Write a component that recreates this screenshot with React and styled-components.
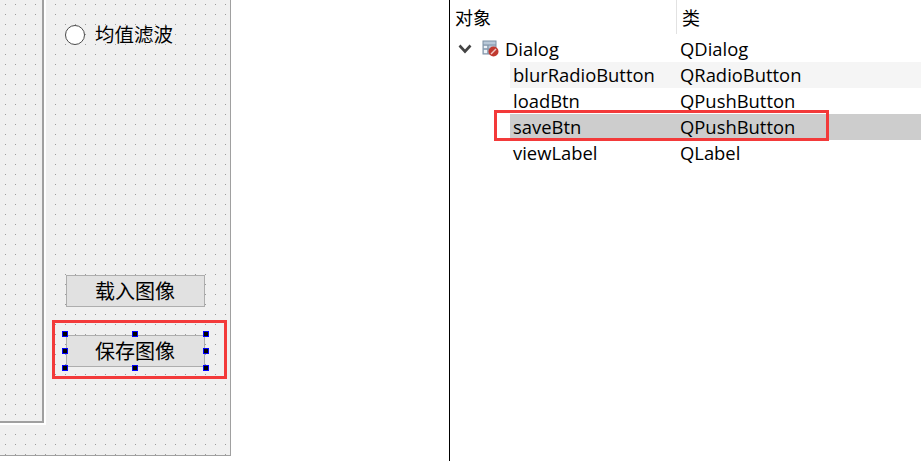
import React from "react";
import styled, { createGlobalStyle } from "styled-components";

const GlobalStyle = createGlobalStyle`
  html, body {
    margin: 0;
    padding: 0;
    background: #fff;
    overflow: hidden;
  }
  body {
    font-family: "Open Sans", "Noto Sans CJK SC", sans-serif;
    color: #000;
  }
`;

const items = [
  { name: "blurRadioButton", type: "QRadioButton", tone: "#f5f5f5" },
  { name: "loadBtn", type: "QPushButton" },
  { name: "saveBtn", type: "QPushButton", tone: "#cdcdcd" },
  { name: "viewLabel", type: "QLabel" },
];

const Page = styled.div`
  width: 921px;
  height: 461px;
  display: flex;
  background: #fff;
`;

const FormCanvas = styled.div`
  width: 231px;
  height: 456px;
  box-sizing: border-box;
  display: flex;
  background-color: #f0f0f0;
  background-image: conic-gradient(at 1px 1px, transparent 75%, #9a9a9a 0);
  background-size: 10px 10px;
  background-position: 5px 4px;
  border-right: 1px solid #a0a0a0;
  border-bottom: 1px solid #a0a0a0;
`;

const ViewFrame = styled.div`
  width: 46px;
  height: 425px;
  flex: none;
  box-sizing: border-box;
  border-right: 2px solid #fff;
  border-bottom: 2px solid #fff;
`;

const FrameEdge = styled.div`
  height: 100%;
  box-sizing: border-box;
  border-right: 2px solid #a0a0a0;
  border-bottom: 2px solid #a0a0a0;
`;

const Controls = styled.div`
  flex: 1;
  display: flex;
  flex-direction: column;
  padding-left: 6px;
`;

const RadioRow = styled.label`
  display: flex;
  align-items: center;
  gap: 10px;
  height: 20px;
  margin: 25px 0 230px 13px;
  font-size: 19.5px;
  line-height: 18px;
`;

const RadioDot = styled.span`
  width: 20px;
  height: 20px;
  box-sizing: border-box;
  border: 1px solid #4a4a4a;
  border-radius: 50%;
  background: #fff;
`;

const FormButton = styled.div`
  width: 139px;
  height: 32px;
  box-sizing: border-box;
  display: flex;
  align-items: center;
  justify-content: center;
  padding: 0 1px 2px 0;
  border: 1px solid #adadad;
  background: #e1e1e1;
  font-size: 20px;
`;

const LoadButton = styled(FormButton)`
  margin-left: 14px;
`;

const SaveOutline = styled.div`
  width: 175px;
  height: 59px;
  box-sizing: border-box;
  margin-top: 13px;
  padding: 12px 0 0 11px;
  border: 3px solid #f33a3a;
`;

const SaveButton = styled(FormButton)`
  position: relative;
`;

const Handle = styled.span`
  position: absolute;
  width: 6px;
  height: 6px;
  box-sizing: border-box;
  background: #000;
  border: 1px solid #0000ff;
  left: ${(p) => p.$x}px;
  top: ${(p) => p.$y}px;
`;

const Inspector = styled.div`
  margin-left: 218px;
  flex: 1;
  min-width: 0;
  border-left: 1px solid #000;
  position: relative;
`;

const HeaderRow = styled.div`
  display: flex;
  height: 36px;
  font-size: 18px;
`;

const HeaderCell = styled.div`
  width: ${(p) => p.$w}px;
  height: 34px;
  box-sizing: border-box;
  padding-left: ${(p) => p.$pad}px;
  display: flex;
  align-items: center;
  border-right: ${(p) => (p.$divider ? "1px solid #e2e2e2" : "none")};
`;

const TreeRow = styled.div`
  display: flex;
  align-items: center;
  height: 26px;
  box-sizing: border-box;
  padding-bottom: 1px;
  margin-left: ${(p) => p.$indent}px;
  background: ${(p) => p.$tone || "transparent"};
  font-size: 18.4px;
  line-height: 24px;
  white-space: nowrap;
`;

const NameCell = styled.div`
  width: ${(p) => p.$w}px;
  flex: none;
  box-sizing: border-box;
  padding-left: 3px;
`;

const RootName = styled.div`
  width: 230px;
  flex: none;
  display: flex;
  align-items: center;
  padding-left: 8px;
  box-sizing: border-box;
`;

const Chevron = styled.svg`
  width: 14px;
  height: 10px;
  margin-right: 10px;
`;

const DialogIcon = styled.svg`
  width: 17px;
  height: 17px;
  margin-right: 6px;
`;

const SelectionOutline = styled.div`
  position: absolute;
  left: 44px;
  top: 110px;
  width: 335px;
  height: 31px;
  box-sizing: border-box;
  border: 3px solid #f33a3a;
`;

const handles = [
  [-5, -5],
  [65, -5],
  [136, -5],
  [-5, 12],
  [136, 12],
  [-5, 29],
  [65, 29],
  [136, 29],
];

export default function App() {
  return (
    <Page>
      <GlobalStyle />
      <FormCanvas>
        <ViewFrame>
          <FrameEdge />
        </ViewFrame>
        <Controls>
          <RadioRow>
            <RadioDot />
            均值滤波
          </RadioRow>
          <LoadButton>载入图像</LoadButton>
          <SaveOutline>
            <SaveButton>
              保存图像
              {handles.map(([x, y]) => (
                <Handle key={`${x}-${y}`} $x={x} $y={y} />
              ))}
            </SaveButton>
          </SaveOutline>
        </Controls>
      </FormCanvas>
      <Inspector>
        <HeaderRow>
          <HeaderCell $w={227} $pad={5} $divider>
            对象
          </HeaderCell>
          <HeaderCell $pad={5} $w={60}>
            类
          </HeaderCell>
        </HeaderRow>
        <TreeRow>
          <RootName>
            <Chevron viewBox="0 0 14 10">
              <polyline points="1.5,1.5 7,7.5 12.5,1.5" fill="none" stroke="#444" strokeWidth="2.6" />
            </Chevron>
            <DialogIcon viewBox="0 0 17 17">
              <rect x="1" y="1" width="13" height="13" fill="#b9c8d8" stroke="#7d90a4" />
              <path d="M1 5h13M1 9h13M6 5v9" stroke="#7d90a4" fill="none" />
              <rect x="2" y="6" width="3" height="2" fill="#eef3f8" />
              <rect x="2" y="10" width="3" height="3" fill="#eef3f8" />
              <circle cx="11.5" cy="11.5" r="5" fill="#c0392f" />
              <path d="M9 14l5-5" stroke="#f0c9c5" strokeWidth="1.4" />
            </DialogIcon>
            Dialog
          </RootName>
          QDialog
        </TreeRow>
        {items.map((item) => (
          <TreeRow key={item.name} $indent={60} $tone={item.tone}>
            <NameCell $w={170}>{item.name}</NameCell>
            {item.type}
          </TreeRow>
        ))}
        <SelectionOutline />
      </Inspector>
    </Page>
  );
}
